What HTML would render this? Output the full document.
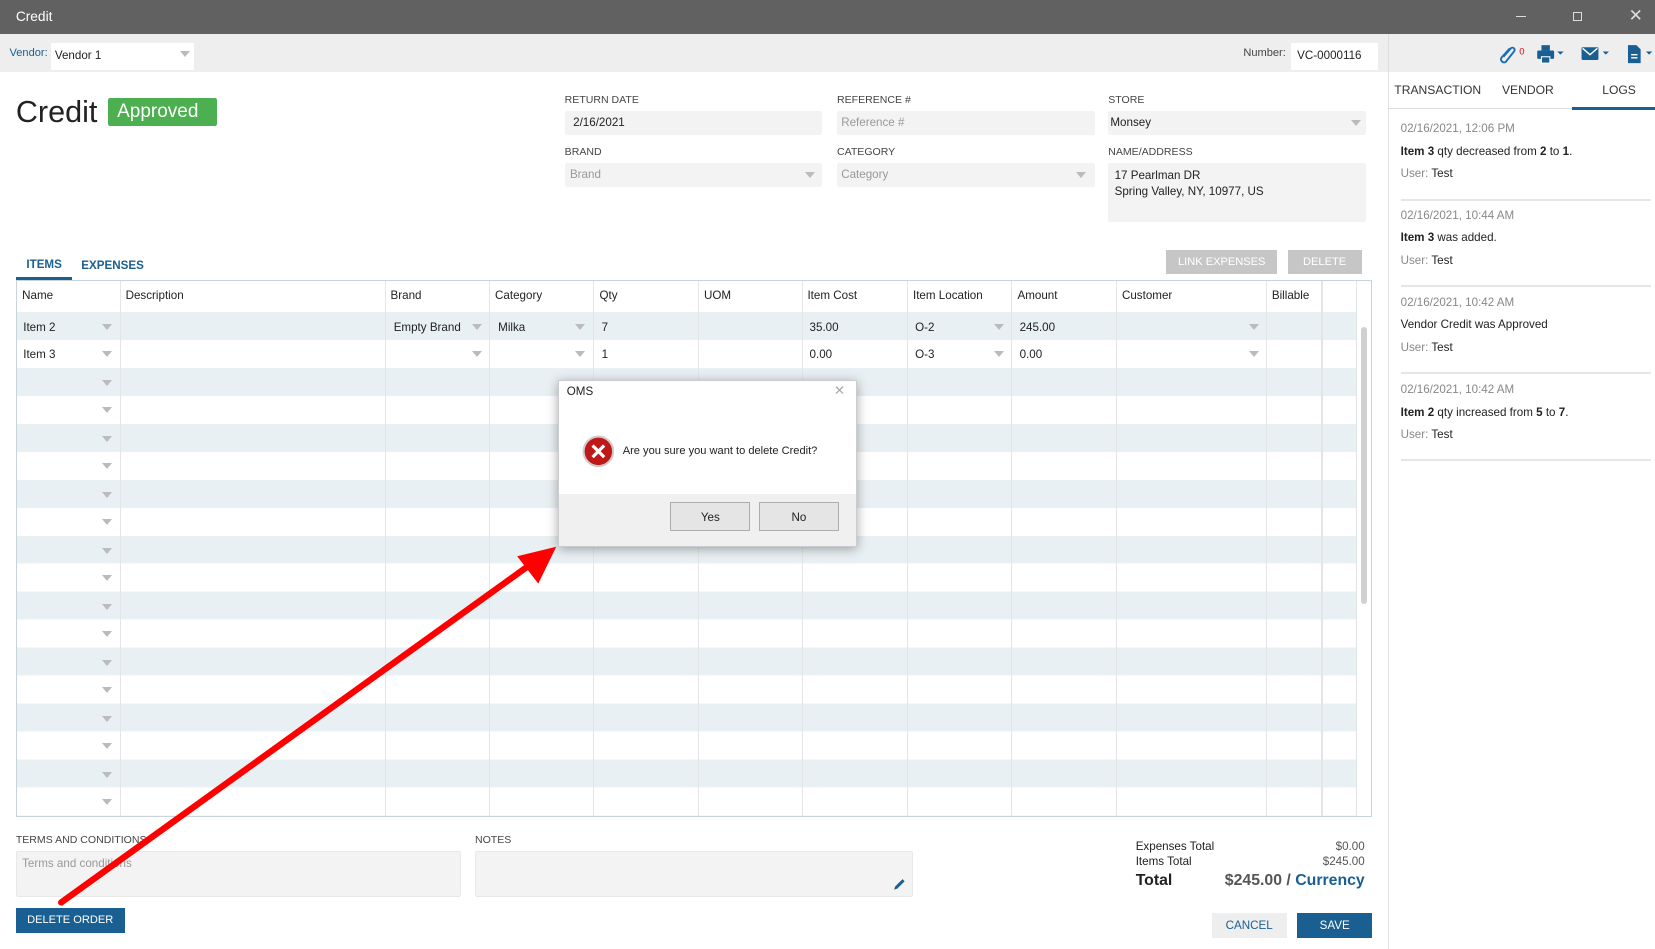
<!DOCTYPE html>
<html><head><meta charset="utf-8">
<style>
*{box-sizing:border-box;margin:0;padding:0}
html,body{width:1655px;height:949px;overflow:hidden;background:#fff}
#w{zoom:1.05548;width:1568px;height:899px;position:relative;font-family:"Liberation Sans",sans-serif;font-size:11px;color:#222}
.a{position:absolute}
.lbl{position:absolute;font-size:10px;color:#444}
.inp{position:absolute;background:#f3f3f3;border-radius:2px;height:23px;padding:5px 8px;font-size:11px}
.ph{color:#999}
.tri{position:absolute;width:0;height:0;border-left:5px solid transparent;border-right:5px solid transparent;border-top:6px solid #bbb}
.vl{position:absolute;top:266px;height:507px;width:1px;background:#e2e6e9}
.hd{position:absolute;top:274px;font-size:11px;color:#222}
.c{position:absolute;font-size:11px}
.log{position:absolute;left:1327px;width:237px;border-bottom:2px solid #e6e6e6;height:74px;font-size:11px}
.log .d{color:#888;margin-top:0}
.log p{margin-top:9px}
</style></head><body><div id="w">
<div class="a" style="left:0;top:0;width:1568px;height:32px;background:#616161"></div>
<div class="a" style="left:15px;top:9px;color:#fff;font-size:13px">Credit</div>
<div class="a" style="left:1436px;top:15px;width:10px;height:1px;background:#ddd"></div>
<div class="a" style="left:1490px;top:11px;width:9px;height:9px;border:1px solid #ddd"></div>
<div class="a" style="left:1543px;top:5px;color:#ddd;font-size:16px">✕</div>
<div class="a" style="left:0;top:32px;width:1315px;height:36px;background:#eeeeee"></div>
<div class="a" style="left:1315px;top:32px;width:253px;height:36px;background:#eeeeee;border-left:1px solid #ddd"></div>
<div class="a" style="left:9px;top:45px;color:#1a5f91;font-size:10.5px">Vendor:</div>
<div class="a" style="left:48px;top:41px;width:136px;height:25px;background:#fff;padding:5px 4px;font-size:11px">Vendor 1</div>
<div class="tri" style="left:171px;top:48px"></div>
<div class="a" style="left:1178px;top:45px;color:#444;font-size:10.5px">Number:</div>
<div class="a" style="left:1223px;top:41px;width:83px;height:25px;background:#fff;padding:5px 6px;font-size:11px">VC-0000116</div>
<svg class="a" style="left:1416px;top:40px" width="150" height="22" viewBox="0 0 150 22">
<path d="M14 6 L6 15 a3 3 0 0 0 4 4 L18 9 a2 2 0 0 0-3-3 L8 14" fill="none" stroke="#1a6fb0" stroke-width="1.8"/>
<text x="23" y="12" fill="#e00" font-size="9" font-family="Liberation Sans">0</text>
<rect x="40" y="8" width="16" height="8" rx="1" fill="#1a5f91"/><rect x="44" y="3" width="8" height="5" fill="#1a5f91"/><rect x="44" y="14" width="8" height="6" fill="#1a5f91" stroke="#fff" stroke-width="1"/>
<path d="M59 9 l3 3 l3-3z" fill="#1a5f91"/>
<rect x="82" y="5" width="16" height="12" rx="1" fill="#1a5f91"/><path d="M83 6 l7 6 l7-6" stroke="#fff" fill="none" stroke-width="1.3"/>
<path d="M102 9 l3 3 l3-3z" fill="#1a5f91"/>
<path d="M126 3 h8 l4 4 v13 h-12z" fill="#1a5f91"/><path d="M129 12 h6 M129 15 h6" stroke="#fff" stroke-width="1.3"/>
<path d="M143 9 l3 3 l3-3z" fill="#1a5f91"/>
</svg>
<div class="a" style="left:1315px;top:68px;width:1px;height:831px;background:#e0e0e0"></div>
<div class="a" style="left:1321px;top:79px;font-size:11.5px;color:#333">TRANSACTION</div>
<div class="a" style="left:1423px;top:79px;font-size:11.5px;color:#333">VENDOR</div>
<div class="a" style="left:1518px;top:79px;font-size:11.5px;color:#333">LOGS</div>
<div class="a" style="left:1316px;top:102px;width:252px;height:1px;background:#ddd"></div>
<div class="a" style="left:1489px;top:101px;width:79px;height:3px;background:#1a5f91"></div>
<div class="log" style="top:116px"><div class="d">02/16/2021, 12:06 PM</div><p><b>Item 3</b> qty decreased from <b>2</b> to <b>1</b>.</p><p><span style="color:#888">User:</span> Test</p></div>
<div class="log" style="top:198px"><div class="d">02/16/2021, 10:44 AM</div><p><b>Item 3</b> was added.</p><p><span style="color:#888">User:</span> Test</p></div>
<div class="log" style="top:280px"><div class="d">02/16/2021, 10:42 AM</div><p>Vendor Credit was Approved</p><p><span style="color:#888">User:</span> Test</p></div>
<div class="log" style="top:363px"><div class="d">02/16/2021, 10:42 AM</div><p><b>Item 2</b> qty increased from <b>5</b> to <b>7</b>.</p><p><span style="color:#888">User:</span> Test</p></div>
<div class="a" style="left:15px;top:90px;font-size:29px;color:#222">Credit</div>
<div class="a" style="left:102px;top:93px;width:104px;height:26px;background:#4caf50;border-radius:2px;color:#fff;font-size:18px;padding:3px 9px">Approved</div>
<div class="lbl" style="left:535px;top:89px">RETURN DATE</div>
<div class="inp" style="left:535px;top:105px;width:244px">2/16/2021</div>
<div class="lbl" style="left:793px;top:89px">REFERENCE #</div>
<div class="inp ph" style="left:793px;top:105px;width:244px;padding-left:4px">Reference #</div>
<div class="lbl" style="left:1050px;top:89px">STORE</div>
<div class="inp" style="left:1050px;top:105px;width:244px;padding-left:2px">Monsey</div>
<div class="tri" style="left:1280px;top:114px"></div>
<div class="lbl" style="left:535px;top:138px">BRAND</div>
<div class="inp ph" style="left:535px;top:154px;width:244px;padding-left:5px">Brand</div>
<div class="tri" style="left:763px;top:163px"></div>
<div class="lbl" style="left:793px;top:138px">CATEGORY</div>
<div class="inp ph" style="left:793px;top:154px;width:244px;padding-left:4px">Category</div>
<div class="tri" style="left:1019px;top:163px"></div>
<div class="lbl" style="left:1050px;top:138px">NAME/ADDRESS</div>
<div class="inp" style="left:1050px;top:154px;width:244px;height:56px;line-height:15px;padding-left:6px">17 Pearlman DR<br>Spring Valley, NY, 10977, US</div>
<div class="a" style="left:25px;top:244px;color:#1a5f91;font-weight:bold;font-size:11px">ITEMS</div>
<div class="a" style="left:77px;top:245px;color:#1a5f91;font-weight:bold;font-size:11px">EXPENSES</div>
<div class="a" style="left:15px;top:262px;width:53px;height:3px;background:#1a5f91"></div>
<div class="a" style="left:1105px;top:237px;width:105px;height:23px;background:#c6c6c6;color:#fff;font-size:10.5px;text-align:center;padding-top:6px">LINK EXPENSES</div>
<div class="a" style="left:1220px;top:237px;width:70px;height:23px;background:#c6c6c6;color:#fff;font-size:10.5px;text-align:center;padding-top:6px">DELETE</div>
<div class="a" style="left:15px;top:265px;width:1285px;height:509px;border:1px solid #c9d3da;background:#fff"></div>
<div class="a" style="left:16px;top:296px;width:1269px;height:477px;background:repeating-linear-gradient(#e9f0f4 0 26.5px,#fff 26.5px 53px)"></div>
<div class="vl" style="left:114px"></div><div class="vl" style="left:365px"></div><div class="vl" style="left:463px"></div><div class="vl" style="left:562px"></div><div class="vl" style="left:661px"></div><div class="vl" style="left:760px"></div><div class="vl" style="left:859px"></div><div class="vl" style="left:958px"></div><div class="vl" style="left:1057px"></div><div class="vl" style="left:1199px"></div><div class="vl" style="left:1252px"></div><div class="vl" style="left:1285px"></div>
<div class="a" style="left:1289px;top:310px;width:6px;height:262px;background:#d0d0d0;border-radius:3px"></div>
<div class="hd" style="left:21px">Name</div><div class="hd" style="left:119px">Description</div><div class="hd" style="left:370px">Brand</div><div class="hd" style="left:469px">Category</div><div class="hd" style="left:568px">Qty</div><div class="hd" style="left:667px">UOM</div><div class="hd" style="left:765px">Item Cost</div><div class="hd" style="left:865px">Item Location</div><div class="hd" style="left:964px">Amount</div><div class="hd" style="left:1063px">Customer</div><div class="hd" style="left:1205px">Billable</div>
<div class="c" style="left:22px;top:304px">Item 2</div><div class="c" style="left:373px;top:304px">Empty Brand</div><div class="c" style="left:472px;top:304px">Milka</div><div class="c" style="left:570px;top:304px">7</div><div class="c" style="left:767px;top:304px">35.00</div><div class="c" style="left:867px;top:304px">O-2</div><div class="c" style="left:966px;top:304px">245.00</div>
<div class="c" style="left:22px;top:330px">Item 3</div><div class="c" style="left:570px;top:330px">1</div><div class="c" style="left:767px;top:330px">0.00</div><div class="c" style="left:867px;top:330px">O-3</div><div class="c" style="left:966px;top:330px">0.00</div>
<div class="tri" style="left:447px;top:307px"></div><div class="tri" style="left:545px;top:307px"></div><div class="tri" style="left:942px;top:307px"></div><div class="tri" style="left:1183px;top:307px"></div>
<div class="tri" style="left:447px;top:333px"></div><div class="tri" style="left:545px;top:333px"></div><div class="tri" style="left:942px;top:333px"></div><div class="tri" style="left:1183px;top:333px"></div>
<div class="tri" style="left:97px;top:307px"></div><div class="tri" style="left:97px;top:333px"></div><div class="tri" style="left:97px;top:360px"></div><div class="tri" style="left:97px;top:386px"></div><div class="tri" style="left:97px;top:413px"></div><div class="tri" style="left:97px;top:439px"></div><div class="tri" style="left:97px;top:466px"></div><div class="tri" style="left:97px;top:492px"></div><div class="tri" style="left:97px;top:519px"></div><div class="tri" style="left:97px;top:545px"></div><div class="tri" style="left:97px;top:572px"></div><div class="tri" style="left:97px;top:598px"></div><div class="tri" style="left:97px;top:625px"></div><div class="tri" style="left:97px;top:651px"></div><div class="tri" style="left:97px;top:678px"></div><div class="tri" style="left:97px;top:704px"></div><div class="tri" style="left:97px;top:731px"></div><div class="tri" style="left:97px;top:757px"></div>
<div class="lbl" style="left:15px;top:790px">TERMS AND CONDITIONS</div>
<div class="inp ph" style="left:15px;top:806px;width:422px;height:44px;border:1px solid #e8e8e8;padding-left:5px">Terms and conditions</div>
<div class="lbl" style="left:450px;top:790px">NOTES</div>
<div class="inp" style="left:450px;top:806px;width:415px;height:44px;border:1px solid #e8e8e8"></div>
<svg class="a" style="left:845px;top:831px" width="14" height="14"><path d="M2 12 L3 9 L10 2 L12 4 L5 11z" fill="#1a5f91"/></svg>
<div class="a" style="left:15px;top:860px;width:103px;height:24px;background:#1a5f91;color:#fff;font-size:10.5px;text-align:center;padding-top:6px">DELETE ORDER</div>
<div class="a" style="left:1076px;top:796px;font-size:11px;line-height:14px">Expenses Total<br>Items Total</div>
<div class="a" style="left:1200px;top:796px;width:93px;text-align:right;font-size:11px;line-height:14px;color:#555">$0.00<br>$245.00</div>
<div class="a" style="left:1076px;top:826px;font-size:15px;font-weight:bold">Total</div>
<div class="a" style="left:1100px;top:826px;width:193px;text-align:right;font-size:15px;font-weight:bold;color:#555">$245.00 / <span style="color:#1a5f91">Currency</span></div>
<div class="a" style="left:1148px;top:865px;width:71px;height:24px;background:#eeeeee;color:#1a5f91;font-size:11px;text-align:center;padding-top:6px">CANCEL</div>
<div class="a" style="left:1229px;top:865px;width:71px;height:24px;background:#1a5f91;color:#fff;font-size:11px;text-align:center;padding-top:6px">SAVE</div>
<div class="a" style="left:529px;top:360px;width:283px;height:158px;background:#f0f0f0;box-shadow:0 2px 10px rgba(0,0,0,.35);border:1px solid #ccc"></div>
<div class="a" style="left:530px;top:361px;width:281px;height:107px;background:#fff"></div>
<div class="a" style="left:537px;top:365px;font-size:11px">OMS</div>
<div class="a" style="left:790px;top:363px;color:#aaa;font-size:13px">✕</div>
<svg class="a" style="left:551px;top:412px" width="31" height="31"><circle cx="15.5" cy="15.5" r="14" fill="#c01818" stroke="#ccc" stroke-width="2"/><path d="M10 10 L21 21 M21 10 L10 21" stroke="#fff" stroke-width="3"/></svg>
<div class="a" style="left:590px;top:422px;font-size:10.5px">Are you sure you want to delete Credit?</div>
<div class="a" style="left:635px;top:476px;width:76px;height:27px;border:1px solid #adadad;background:#e5e5e5;text-align:center;padding-top:7px">Yes</div>
<div class="a" style="left:719px;top:476px;width:76px;height:27px;border:1px solid #adadad;background:#e5e5e5;text-align:center;padding-top:7px">No</div>
<svg class="a" style="left:0;top:0" width="1568" height="899"><line x1="58" y1="855" x2="505" y2="533" stroke="#f00" stroke-width="6" stroke-linecap="round"/><path d="M527 518 L490 527 L510 553z" fill="#f00"/></svg>
</div></body></html>
